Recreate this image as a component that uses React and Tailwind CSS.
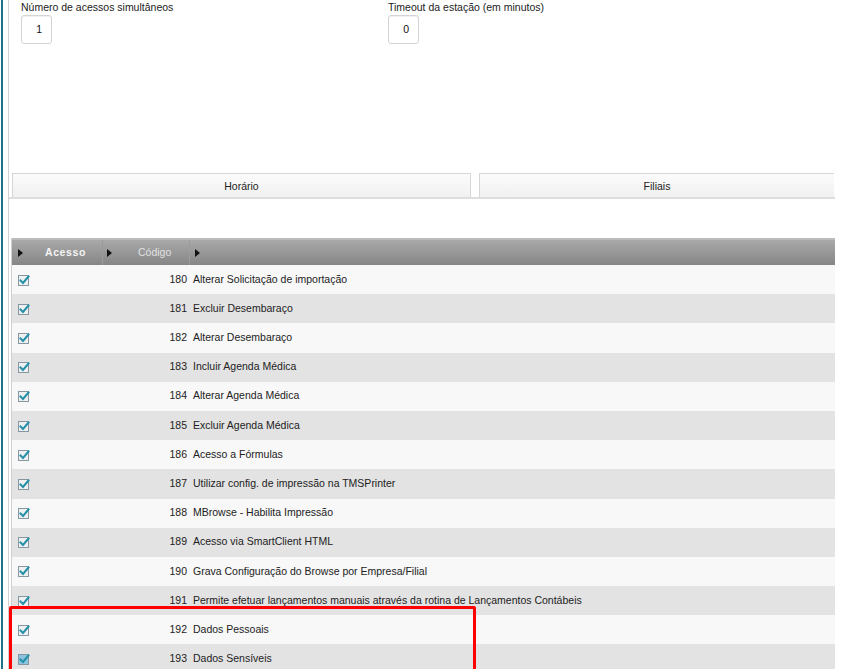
import React from 'react';

const rows = [
  [180, 'Alterar Solicitação de importação'],
  [181, 'Excluir Desembaraço'],
  [182, 'Alterar Desembaraço'],
  [183, 'Incluir Agenda Médica'],
  [184, 'Alterar Agenda Médica'],
  [185, 'Excluir Agenda Médica'],
  [186, 'Acesso a Fórmulas'],
  [187, 'Utilizar config. de impressão na TMSPrinter'],
  [188, 'MBrowse - Habilita Impressão'],
  [189, 'Acesso via SmartClient HTML'],
  [190, 'Grava Configuração do Browse por Empresa/Filial'],
  [191, 'Permite efetuar lançamentos manuais através da rotina de Lançamentos Contábeis'],
  [192, 'Dados Pessoais'],
  [193, 'Dados Sensíveis'],
];

const CheckIcon = ({ selected }) => (
  <svg width="12" height="12" viewBox="0 0 12 12">
    <rect x="0.5" y="1.5" width="10" height="10" fill={selected ? '#8cc4e0' : '#eef0f1'} stroke="#8797a2" />
    <path d="M2.5 6.5 L5 9 L10.5 2.5" fill="none" stroke="#2690a8" strokeWidth="2" strokeLinecap="square" />
  </svg>
);

const Arrow = () => (
  <svg width="5" height="8" viewBox="0 0 5 8">
    <path d="M0 0 L5 4 L0 8 Z" fill="#111" />
  </svg>
);

const Field = ({ label, value }) => (
  <div className="flex flex-col">
    <span className="text-[10.5px] leading-[13px] text-[#222] mt-[1px]">{label}</span>
    <div className="w-[31px] h-[29px] mt-[1px] border border-[#d4d4d4] rounded-[3px] bg-white flex items-center justify-end pr-[9px] text-[10.5px] text-[#111] shadow-[inset_0_1px_1px_rgba(0,0,0,0.06)]">
      {value}
    </div>
  </div>
);

export default function App() {
  return (
    <div
      className="relative w-[846px] h-[669px] overflow-hidden bg-white flex"
      style={{ fontFamily: '"Liberation Sans", Arial, sans-serif' }}
    >
      <div className="w-[1px] shrink-0" />
      <div className="w-[2px] shrink-0 bg-[#1d7488]" />
      <div className="w-[5px] shrink-0" />
      <div className="flex-1 border-l border-[#d2d2d2] flex flex-col">
        {/* top fields */}
        <div className="h-[173px] shrink-0 flex pl-[12px]">
          <div className="w-[367px]">
            <Field label="Número de acessos simultâneos" value="1" />
          </div>
          <Field label="Timeout da estação (em minutos)" value="0" />
        </div>

        {/* tabs */}
        <div className="shrink-0 flex pl-[3px] w-[826px] border-b-2 border-[#dedede]">
          <div className="w-[459px] h-[24px] border border-b-0 border-[#d6d6d6] bg-gradient-to-b from-[#fbfbfb] to-[#f1f1f1] flex items-center justify-center text-[10.5px] text-[#222] pt-[2px]">
            Horário
          </div>
          <div className="w-[8px]" />
          <div className="w-[355px] h-[24px] border border-b-0 border-r-0 border-[#d6d6d6] bg-gradient-to-b from-[#fbfbfb] to-[#f1f1f1] flex items-center justify-center text-[10.5px] text-[#222] pt-[2px]">
            Filiais
          </div>
        </div>

        <div className="h-[39px] shrink-0" />

        {/* grid */}
        <div className="shrink-0 w-[824px] ml-[2px] border-l border-[#cfcfcf]">
          <div className="h-[27px] border-t-2 border-[#bcbcbc] bg-gradient-to-b from-[#a9a9a9] to-[#868686] flex items-center text-[10.5px]">
            <div className="w-[91px] h-full flex items-center border-r border-[#9c9c9c]">
              <span className="ml-[6px]"><Arrow /></span>
              <span className="ml-[22px] font-bold text-[#f4f4f4] tracking-[0.6px]">Acesso</span>
            </div>
            <div className="w-[87px] h-full flex items-center border-r border-[#9c9c9c]">
              <span className="ml-[4px]"><Arrow /></span>
              <span className="ml-[26px] text-[#e2e2e2]">Código</span>
            </div>
            <span className="ml-[5px]"><Arrow /></span>
          </div>
          {rows.map(([code, desc], i) => (
            <div
              key={code}
              className={`h-[29.2px] flex items-center text-[10.5px] text-[#222] ${i % 2 === 0 ? 'bg-[#f8f8f8]' : 'bg-[#e3e3e3]'}`}
            >
              <div className="w-[91px] pl-[6px] flex items-center">
                <CheckIcon selected={code === 193} />
              </div>
              <div className="w-[84px] text-right">{code}</div>
              <div className="pl-[6px] whitespace-nowrap">{desc}</div>
            </div>
          ))}
        </div>
      </div>

      {/* highlight */}
      <div className="absolute left-[9px] top-[606px] w-[467px] h-[80px] border-[3px] border-[#ff0000] rounded-[2px]" />
    </div>
  );
}
